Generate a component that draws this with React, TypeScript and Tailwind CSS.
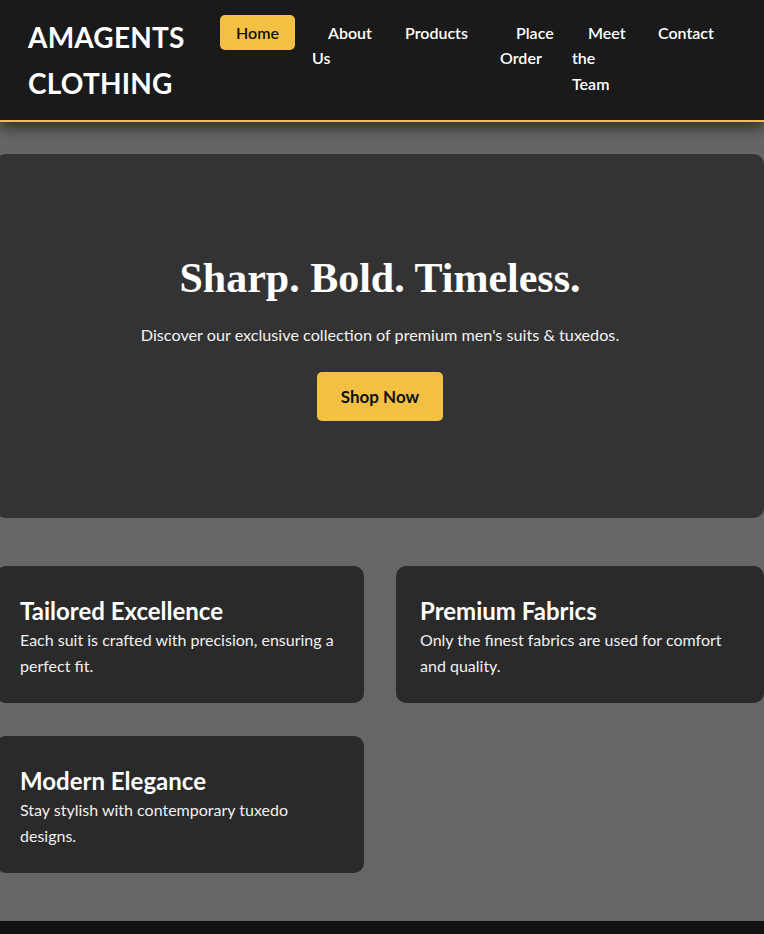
import React from "react";

const navLinks = [
  { label: "Home", width: "w-[76px]", active: true },
  { label: "About Us", width: "w-[61px]" },
  { label: "Products", width: "w-[95px]" },
  { label: "Place Order", width: "w-[56px]" },
  { label: "Meet the Team", width: "w-[54px]" },
  { label: "Contact", width: "w-[88px]" },
];

const features = [
  {
    title: "Tailored Excellence",
    text: "Each suit is crafted with precision, ensuring a perfect fit.",
  },
  {
    title: "Premium Fabrics",
    text: "Only the finest fabrics are used for comfort and quality.",
  },
  {
    title: "Modern Elegance",
    text: "Stay stylish with contemporary tuxedo designs.",
  },
];

export default function App() {
  return (
    <div className="min-h-screen overflow-x-hidden bg-[#666666] font-['Lato','Open_Sans',sans-serif] text-white">
      {/* Header */}
      <header className="relative z-10 flex h-[122px] items-center justify-between border-b-2 border-[#f2c144] bg-[#1a1a1a] pl-7 pr-[34px] shadow-[0_6px_14px_rgba(0,0,0,0.55)]">
        <h1 className="w-[170px] text-[28px] font-bold leading-[46px] tracking-[0.2px]">
          AMAGENTS CLOTHING
        </h1>
        <nav className="mb-1">
          <ul className="flex items-start gap-4">
            {navLinks.map((link) => (
              <li key={link.label} className={`${link.width} shrink-0 text-base font-semibold leading-[25.6px]`}>
                <a
                  href="#"
                  className={
                    link.active
                      ? "rounded-[5px] bg-[#f2c144] px-4 py-2 text-[#111]"
                      : "px-4 py-2 text-white"
                  }
                >
                  {link.label}
                </a>
              </li>
            ))}
          </ul>
        </nav>
      </header>

      {/* Main */}
      <main className="ml-[-4px] flex w-[768px] flex-col pt-8">
        <section className="rounded-[10px] bg-[#333333] pb-[97px] pt-[100px] text-center">
          <h2 className="font-['Liberation_Serif','Times_New_Roman',serif] text-[42px] font-bold leading-[48px]">
            Sharp. Bold. Timeless.
          </h2>
          <p className="mt-5 text-[16.2px] leading-[26px] text-[#f2f2f2]">
            Discover our exclusive collection of premium men's suits &amp; tuxedos.
          </p>
          <button className="mt-[24px] rounded-[5px] bg-[#f2c144] px-6 py-3 text-[17px] font-bold leading-[25px] text-[#111]">
            Shop Now
          </button>
        </section>

        <section className="mt-12 grid grid-cols-2 gap-x-8 gap-y-[33px]">
          {features.map((f) => (
            <div key={f.title} className="rounded-[10px] bg-[#2a2a2a] px-6 pb-[24px] pt-[30px]">
              <h3 className="mb-[2px] text-2xl font-bold leading-[29px]">{f.title}</h3>
              <p className="text-base leading-[26px] text-[#f0f0f0]">{f.text}</p>
            </div>
          ))}
        </section>
      </main>

      {/* Footer */}
      <footer className="mt-12 bg-[#111111] py-6 text-center text-sm text-[#cccccc]">
        © 2025 AMAGENTS CLOTHING. All rights reserved.
      </footer>
    </div>
  );
}
